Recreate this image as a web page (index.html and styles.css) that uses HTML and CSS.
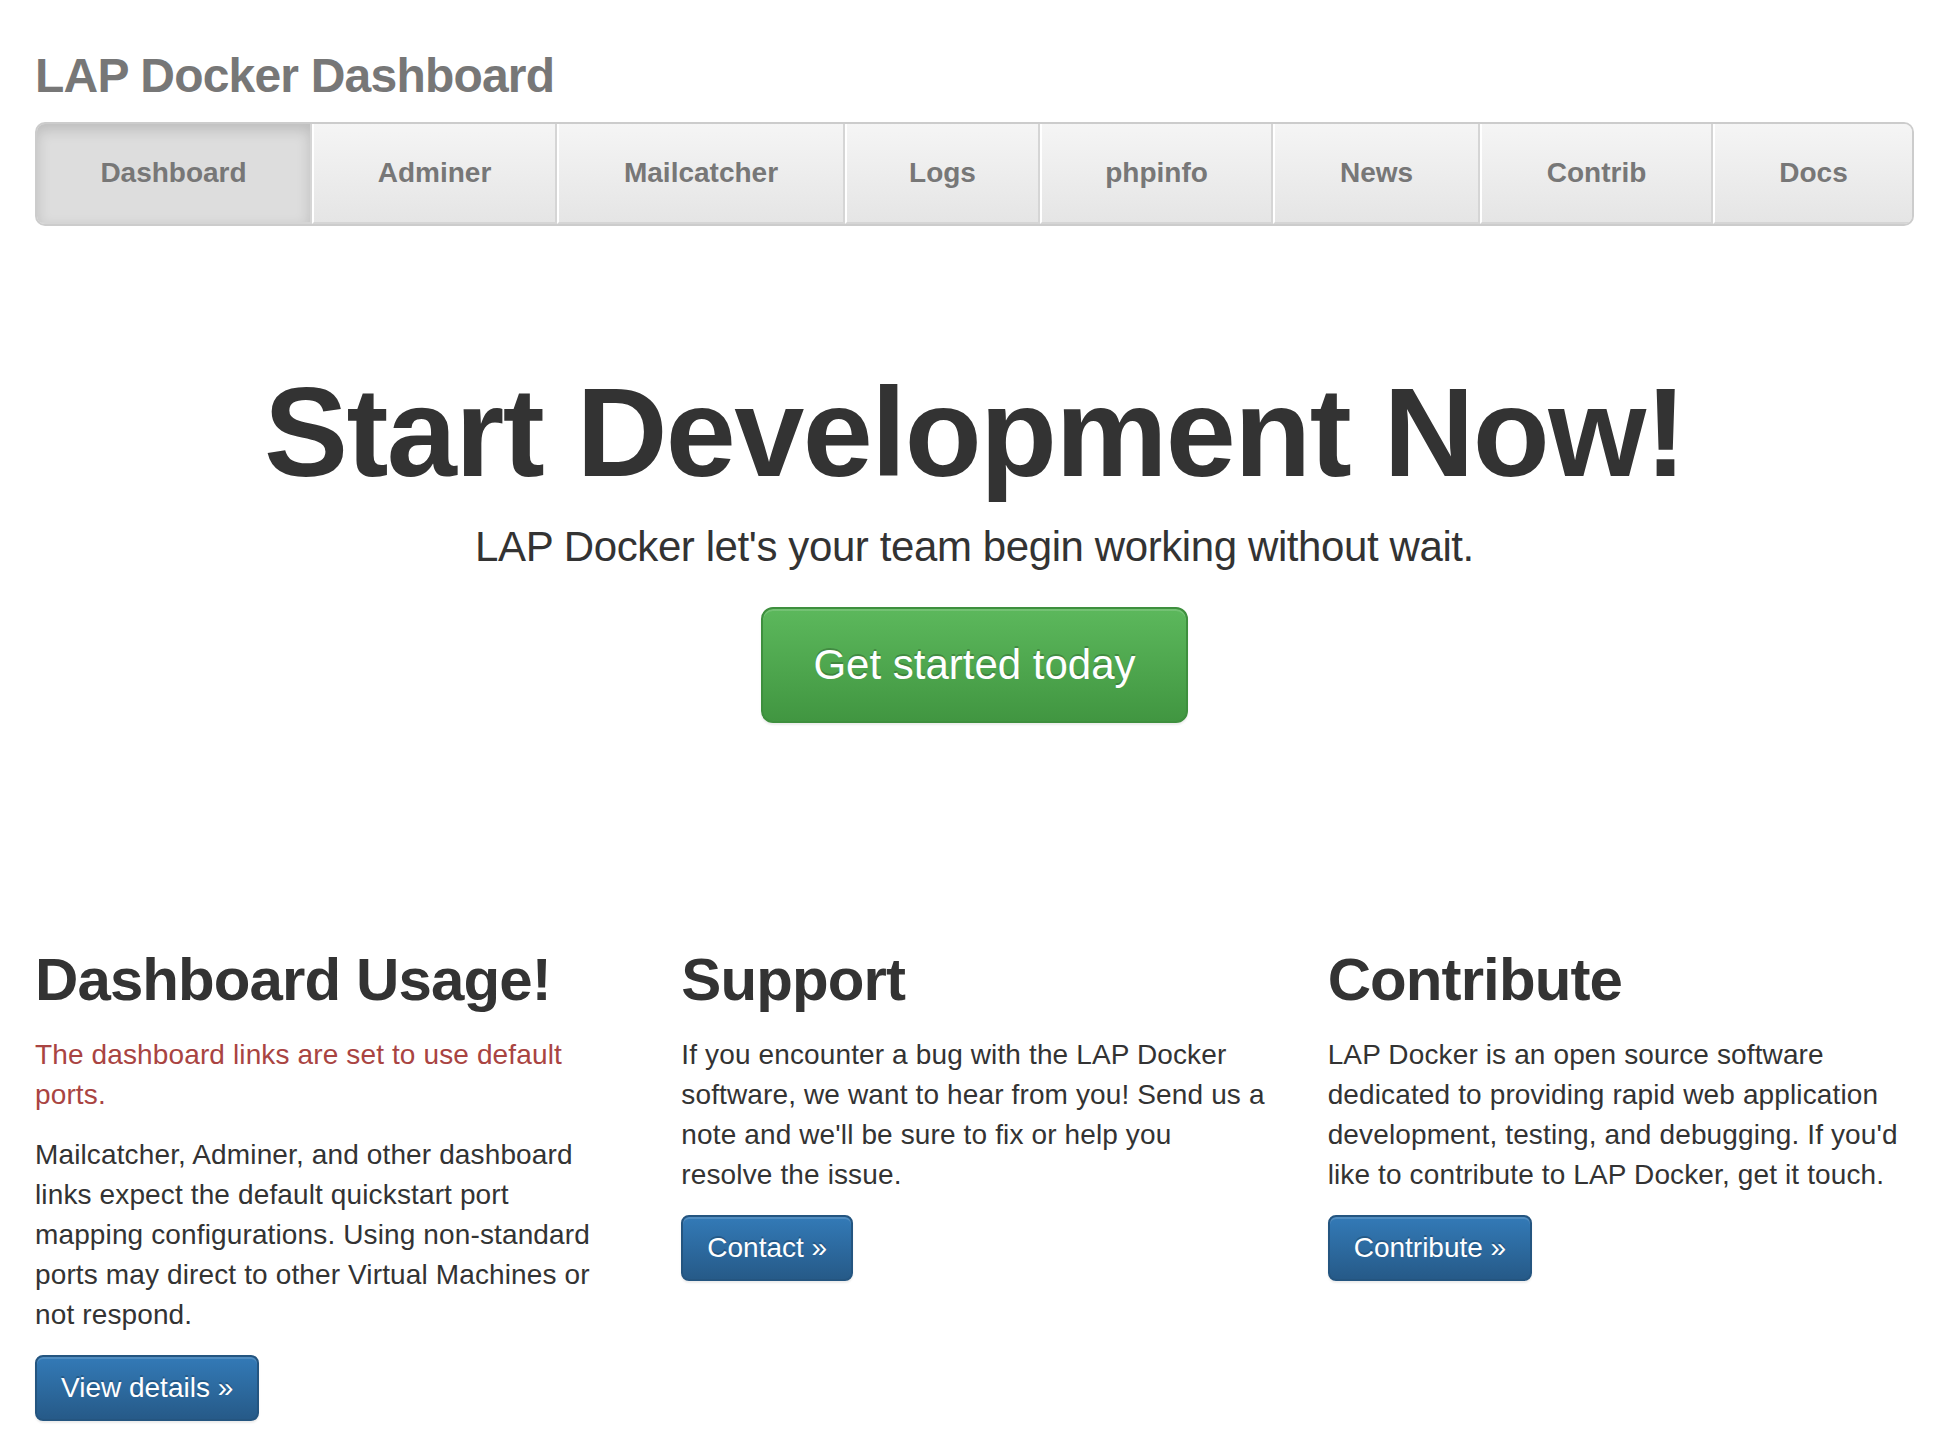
FILE: index.html
```html
<!DOCTYPE html>
<html lang="en">
<head>
<meta charset="utf-8">
<title>LAP Docker Dashboard</title>
<link rel="stylesheet" href="styles.css">
</head>
<body>
<div class="container">
  <header class="masthead">
    <h3 class="brand">LAP Docker Dashboard</h3>
    <nav>
      <ul class="nav-justified">
        <li class="active"><a href="#">Dashboard</a></li>
        <li><a href="#">Adminer</a></li>
        <li><a href="#">Mailcatcher</a></li>
        <li><a href="#">Logs</a></li>
        <li><a href="#">phpinfo</a></li>
        <li><a href="#">News</a></li>
        <li><a href="#">Contrib</a></li>
        <li><a href="#">Docs</a></li>
      </ul>
    </nav>
  </header>

  <section class="jumbotron">
    <h1>Start Development Now!</h1>
    <p class="lead">LAP Docker let's your team begin working without wait.</p>
    <p class="cta"><a class="btn btn-lg btn-success" href="#">Get started today</a></p>
  </section>

  <div class="row">
    <div class="col">
      <h2>Dashboard Usage!</h2>
      <p class="text-danger">The dashboard links are set to use default ports.</p>
      <p>Mailcatcher, Adminer, and other dashboard links expect the default quickstart port mapping configurations. Using non-standard ports may direct to other Virtual Machines or not respond.</p>
      <p><a class="btn btn-primary" href="#">View details &raquo;</a></p>
    </div>
    <div class="col">
      <h2>Support</h2>
      <p>If you encounter a bug with the LAP Docker software, we want to hear from you! Send us a note and we'll be sure to fix or help you resolve the issue.</p>
      <p><a class="btn btn-primary" href="#">Contact &raquo;</a></p>
    </div>
    <div class="col">
      <h2>Contribute</h2>
      <p>LAP Docker is an open source software dedicated to providing rapid web application development, testing, and debugging. If you'd like to contribute to LAP Docker, get it touch.</p>
      <p><a class="btn btn-primary" href="#">Contribute &raquo;</a></p>
    </div>
  </div>
</div>
</body>
</html>
```

FILE: styles.css
```css
* {
  box-sizing: border-box;
}

html,
body {
  margin: 0;
  background: #fff;
}

body {
  font-family: "Liberation Sans", Arial, Helvetica, sans-serif;
  font-size: 28px;
  line-height: 40px;
  color: #333;
}

.container {
  padding: 50px 35px 0;
}

/* Masthead */
.brand {
  margin: 0 0 19px;
  font-size: 48px;
  line-height: 52.8px;
  font-weight: 700;
  letter-spacing: -0.8px;
  color: #777;
}

.nav-justified {
  list-style: none;
  margin: 0;
  padding: 0;
  display: grid;
  grid-template-columns: 275fr 245fr 288fr 195fr 233fr 207fr 233fr 199fr;
  background: #eee;
  border: 2px solid #ccc;
  border-radius: 10px;
  overflow: hidden;
}

.nav-justified a {
  display: block;
  padding: 29px 0;
  text-align: center;
  font-weight: 700;
  color: #777;
  text-decoration: none;
  background: linear-gradient(to bottom, #f5f5f5 0%, #e5e5e5 100%);
  border-bottom: 2px solid #d5d5d5;
  border-left: 2px solid #fff;
  border-right: 2px solid #d5d5d5;
}

.nav-justified li:first-child a {
  border-left: 0;
}

.nav-justified li:last-child a {
  border-right: 0;
}

.nav-justified .active a {
  background: #ddd;
  box-shadow: inset 0 6px 14px rgba(0, 0, 0, 0.15);
}

/* Jumbotron */
.jumbotron {
  text-align: center;
  padding: 98px 0 124px;
  margin-bottom: 60px;
}

.jumbotron h1 {
  margin: 40px 0 16px;
  font-size: 126px;
  line-height: 138.6px;
  font-weight: 700;
  letter-spacing: -1.6px;
  color: #333;
}

.lead {
  margin: 0 0 30px;
  font-size: 42px;
  line-height: 58.8px;
  font-weight: 300;
  letter-spacing: -0.4px;
  color: #333;
}

.cta {
  margin: 0;
  display: flex;
  justify-content: center;
}

/* Buttons */
.btn {
  display: inline-block;
  padding: 11px 24px;
  font-size: 28px;
  line-height: 40px;
  letter-spacing: 0;
  border: 2px solid transparent;
  border-radius: 8px;
  color: #fff;
  text-decoration: none;
  text-shadow: 0 -2px 0 rgba(0, 0, 0, 0.2);
  box-shadow: inset 0 2px 0 rgba(255, 255, 255, 0.15), 0 2px 2px rgba(0, 0, 0, 0.075);
}

.btn-lg {
  padding: 28px 50px;
  font-size: 42px;
  line-height: 56px;
  border-radius: 12px;
}

.btn-success {
  background: linear-gradient(to bottom, #5cb85c 0%, #419641 100%);
  border-color: #3e8f3e;
}

.btn-primary {
  background: linear-gradient(to bottom, #337ab7 0%, #265a88 100%);
  border-color: #245580;
}

/* Marketing columns */
.row {
  display: grid;
  grid-template-columns: repeat(3, 1fr);
  column-gap: 60px;
}

.col h2 {
  margin: 40px 0 22px;
  font-size: 60px;
  line-height: 66px;
  font-weight: 700;
  letter-spacing: -0.9px;
  color: #333;
}

.col p {
  margin: 0 0 20px;
  letter-spacing: 0.13px;
}

.text-danger {
  color: #a94442;
}
```
